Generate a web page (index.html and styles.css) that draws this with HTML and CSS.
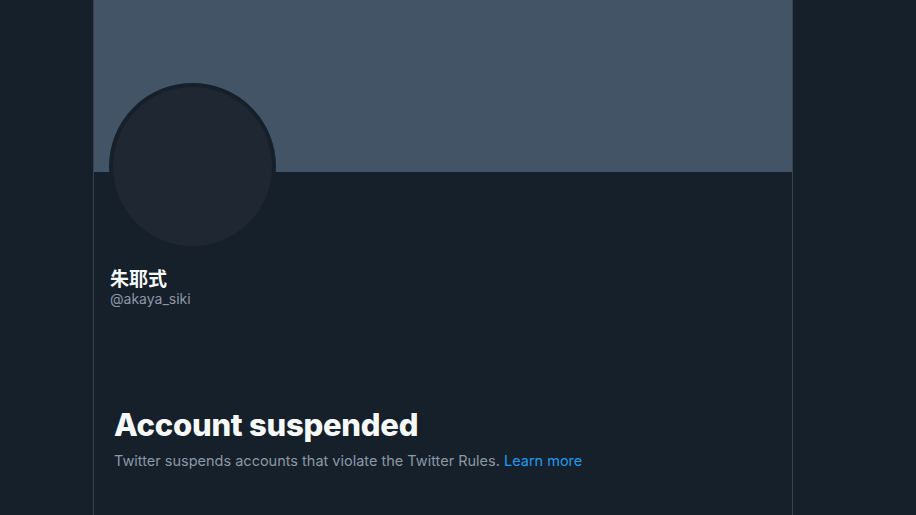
FILE: index.html
```html
<!DOCTYPE html>
<html lang="ja">
<head>
<meta charset="utf-8">
<link rel="stylesheet" href="styles.css">
</head>
<body>
<div class="page">
  <main class="column">
    <div class="banner"></div>
    <div class="profile">
      <div class="avatar"></div>
      <div class="name">朱耶式</div>
      <div class="handle">@akaya_siki</div>
    </div>
    <section class="notice">
      <h1 class="title">Account suspended</h1>
      <p class="desc">Twitter suspends accounts that violate the Twitter Rules. <a class="link" href="#">Learn more</a></p>
    </section>
  </main>
</div>
</body>
</html>
```
FILE: styles.css
```css
html, body {
  margin: 0;
  padding: 0;
  background: #16202b;
  height: 100%;
  overflow: hidden;
}
body {
  font-family: "Segoe UI", Inter, "Noto Sans CJK JP", sans-serif;
  color: #f7f9f9;
}
.page {
  display: flex;
  justify-content: flex-start;
  padding-left: 93px;
  height: 100%;
}
.column {
  width: 698px;
  border-left: 1px solid #38444d;
  border-right: 1px solid #38444d;
  min-height: 100%;
  background: #16202b;
}
.banner {
  height: 172px;
  background: #425466;
}
.profile {
  padding: 0 16px;
}
.avatar {
  width: 159px;
  height: 159px;
  border-radius: 50%;
  border: 4px solid #16202b;
  background: #1f2732;
  margin-top: -89px;
  margin-left: -1px;
}
.name {
  margin-top: 16px;
  font-family: "Noto Sans CJK JP", sans-serif;
  font-weight: 700;
  font-size: 19px;
  line-height: 24px;
  color: #f7f9f9;
}
.handle {
  font-family: Inter, sans-serif;
  font-size: 14px;
  line-height: 18px;
  color: #8b98a5;
}
.notice {
  padding: 99px 20px 0;
}
.title {
  margin: 0;
  font-family: Inter, sans-serif;
  font-weight: 800;
  font-size: 31px;
  line-height: 36px;
  letter-spacing: -0.25px;
  color: #f7f9f9;
}
.desc {
  margin: 8px 0 0;
  font-family: Inter, sans-serif;
  font-size: 14.5px;
  line-height: 20px;
  color: #8b98a5;
}
.link {
  color: #1d9bf0;
  text-decoration: none;
}
```
